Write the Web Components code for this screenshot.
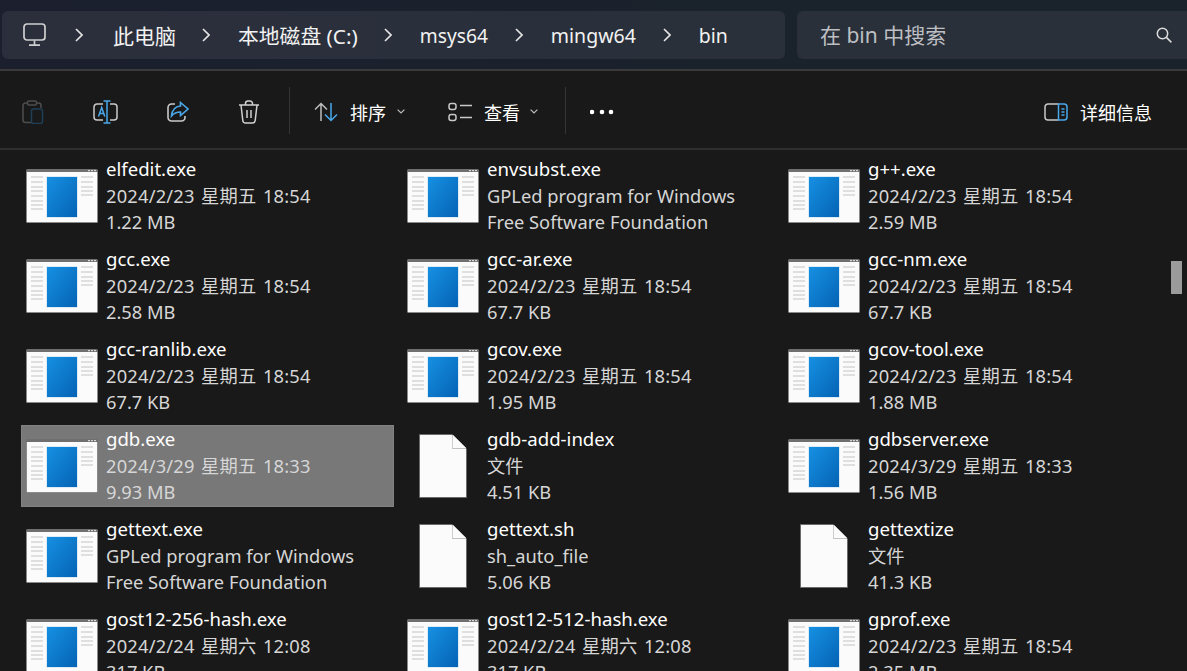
<!DOCTYPE html>
<html lang="zh"><head><meta charset="utf-8"><title>bin</title>
<style>
html,body{margin:0;padding:0;height:671px;overflow:hidden;background:#191919}
body{font-family:"Noto Sans","Noto Sans CJK SC",sans-serif;color:#fff}
</style></head><body>
<explorer-window>
  <address-row>
    <crumb-item style="font-size:21px">此电脑</crumb-item><crumb-item style="font-size:20.8px">本地磁盘 (C:)</crumb-item><crumb-item style="font-size:19.2px">msys64</crumb-item><crumb-item style="font-size:19.5px;margin-left:1px">mingw64</crumb-item><crumb-item style="font-size:19.5px;margin-left:1px">bin</crumb-item>
  </address-row>
  <command-bar></command-bar>
  <file-grid>
    <file-item name="elfedit.exe" l2="2024/2/23 星期五 18:54" l3="1.22 MB"></file-item>
    <file-item name="envsubst.exe" l2="GPLed program for Windows" l3="Free Software Foundation"></file-item>
    <file-item name="g++.exe" l2="2024/2/23 星期五 18:54" l3="2.59 MB"></file-item>
    <file-item name="gcc.exe" l2="2024/2/23 星期五 18:54" l3="2.58 MB"></file-item>
    <file-item name="gcc-ar.exe" l2="2024/2/23 星期五 18:54" l3="67.7 KB"></file-item>
    <file-item name="gcc-nm.exe" l2="2024/2/23 星期五 18:54" l3="67.7 KB"></file-item>
    <file-item name="gcc-ranlib.exe" l2="2024/2/23 星期五 18:54" l3="67.7 KB"></file-item>
    <file-item name="gcov.exe" l2="2024/2/23 星期五 18:54" l3="1.95 MB"></file-item>
    <file-item name="gcov-tool.exe" l2="2024/2/23 星期五 18:54" l3="1.88 MB"></file-item>
    <file-item name="gdb.exe" l2="2024/3/29 星期五 18:33" l3="9.93 MB" selected></file-item>
    <file-item name="gdb-add-index" l2="文件" l3="4.51 KB" kind="doc"></file-item>
    <file-item name="gdbserver.exe" l2="2024/3/29 星期五 18:33" l3="1.56 MB"></file-item>
    <file-item name="gettext.exe" l2="GPLed program for Windows" l3="Free Software Foundation"></file-item>
    <file-item name="gettext.sh" l2="sh_auto_file" l3="5.06 KB" kind="doc"></file-item>
    <file-item name="gettextize" l2="文件" l3="41.3 KB" kind="doc"></file-item>
    <file-item name="gost12-256-hash.exe" l2="2024/2/24 星期六 12:08" l3="317 KB"></file-item>
    <file-item name="gost12-512-hash.exe" l2="2024/2/24 星期六 12:08" l3="317 KB"></file-item>
    <file-item name="gprof.exe" l2="2024/2/23 星期五 18:54" l3="2.35 MB"></file-item>
  </file-grid>
</explorer-window>
<script>
const def=(tag,html)=>{customElements.define(tag,class extends HTMLElement{
  constructor(){super();this.attachShadow({mode:'open'}).innerHTML=html;}
})};
def('explorer-window',`<style>:host{display:flex;flex-direction:column;width:1187px;height:671px;overflow:hidden;position:relative;background:#191919}
.thumb{position:absolute;left:1171px;top:261px;width:11px;height:33px;background:#9b9b9b}</style><slot></slot><div class="thumb"></div>`);

const CHEV=`<svg width="8" height="14" viewBox="0 0 8 14" fill="none" stroke="#e6e6e6" stroke-width="1.6" style="display:block;flex:none"><path d="M1 1l6 6-6 6"/></svg>`;
def('address-row',`<style>
:host{display:flex;gap:12px;height:69px;box-sizing:border-box;padding:11px 0 10px 2px;background:linear-gradient(90deg,#1b1f2e,#1a222c 60%);flex:none}
.bar{width:783px;height:48px;border-radius:6px;background:linear-gradient(90deg,#2b2f3c,#29303a);display:flex;align-items:center;box-sizing:border-box;padding-left:21px}
.pc{margin-right:28px;display:block;flex:none}
.search{flex:1;height:48px;border-radius:6px 0 0 6px;background:#29303a;display:flex;align-items:center;justify-content:space-between;box-sizing:border-box;padding:0 15px 2px 23px;color:#bdbfc2;font-size:21px}
</style>
<div class="bar"><svg class="pc" width="24" height="24" viewBox="0 0 24 24" fill="none" stroke="#cfcfcf" stroke-width="1.7"><rect x="1" y="1" width="21" height="16" rx="3"/><path d="M11.5 17.5v4.500M6 22.200h11"/></svg><slot></slot></div>
<div class="search"><span>在 bin 中搜索</span><svg width="16" height="16" viewBox="0 0 16 16" fill="none" stroke="#dcdcdc" stroke-width="1.5" style="margin-top:2px"><circle cx="6.5" cy="6.5" r="5.2"/><path d="M10.4 10.4l5 5"/></svg></div>`);
def('crumb-item',`<style>:host{display:flex;align-items:center;gap:28px;margin-right:26px;font-size:20px;color:#f2f2f2;white-space:nowrap}
:host(:first-child){gap:30px}</style>${CHEV}<span><slot></slot></span>`);

const SMALLCHEV=`<svg width="8" height="5" viewBox="0 0 8 5" fill="none" stroke="#bdbdbd" stroke-width="1.2" style="display:block"><path d="M.6.6L4 4 7.4.6"/></svg>`;
def('command-bar',`<style>
:host{display:flex;align-items:center;flex:none;height:81px;box-sizing:border-box;border-top:2px solid #3a3a3a;border-bottom:2px solid #2e2e2e;padding:4px 0 0 21px;background:#191919;font-size:18px;color:#fff}
svg{display:block;flex:none}
.sep{width:1px;height:47px;background:#343434;flex:none;margin-top:-3px}
.lbl{white-space:nowrap}
.grow{flex:1}
</style>
<svg style="margin-right:48px" width="24" height="24" viewBox="0 0 24 24" fill="none" stroke-width="1.5"><path stroke="#4d4d4d" d="M10 22.500H4.500a2.500 2.500 0 0 1-2.500-2.500V5.500A2.500 2.500 0 0 1 4.500 3H6M16 3h1.500a2.500 2.500 0 0 1 2.500 2.500V8"/><rect stroke="#4d4d4d" x="6.500" y="1" width="9" height="4" rx="1.500"/><rect stroke="#1f4057" x="10.500" y="9" width="11" height="14.500" rx="2"/></svg>
<svg style="margin-right:49px" width="25" height="24" viewBox="0 0 25 24" fill="none" stroke-width="1.5"><path stroke="#c9c9c9" d="M10 4H4a3 3 0 0 0-3 3v10a3 3 0 0 0 3 3h6M17 4h4a3 3 0 0 1 3 3v10a3 3 0 0 1-3 3h-4"/><path stroke="#4aa8ea" d="M10.500 1H17.500M14 1v22M10.500 23H17.500M5.500 16.500L8.700 7.500 11.800 16.500M6.600 13.500h4.300"/></svg>
<svg style="margin-right:49px" width="22" height="21" viewBox="0 0 22 21" fill="none" stroke-width="1.6"><path stroke="#c9c9c9" d="M8 3H4.500A3.500 3.500 0 0 0 1 6.500v10A3.500 3.500 0 0 0 4.500 20h10a3.500 3.500 0 0 0 3.500-3.500V15"/><path stroke="#4aa8ea" d="M13.500 1.500L21 8l-7.500 6.500V11C9.500 11 7 12 4.500 15 5 9.500 8 5.500 13.500 5z"/></svg>
<svg style="margin-right:29px" width="22" height="24" viewBox="0 0 22 24" fill="none" stroke="#d0d0d0" stroke-width="1.5"><path d="M1 5h20M7.500 5V3.500A2.500 2.500 0 0 1 10 1h2a2.500 2.500 0 0 1 2.500 2.500V5M3 5l1.800 15.500A2.800 2.800 0 0 0 7.600 23h6.800a2.800 2.800 0 0 0 2.800-2.500L19 5M9 10v8M13 10v8"/></svg>
<div class="sep" style="margin-right:24px"></div>
<svg style="margin-right:12px" width="24" height="20" viewBox="0 0 24 20" fill="none" stroke-width="1.5"><path stroke="#bdbdbd" d="M7 19V1.500M1 7.500l6-6 6 6"/><path stroke="#4aa8ea" d="M17 1v17.500M11 12.500l6 6 6-6"/></svg>
<span class="lbl" style="margin-right:11px">排序</span>${SMALLCHEV.replace('style="','style="margin-right:43px;')}
<svg style="margin-right:12px" width="24" height="20" viewBox="0 0 24 20" fill="none" stroke="#c9c9c9" stroke-width="1.5"><rect x="1" y="1.500" width="7" height="6" rx="2.200"/><rect x="1" y="12.500" width="7" height="6" rx="2.200"/><path d="M12 3.500h12M12 15.500h12"/></svg>
<span class="lbl" style="margin-right:10px">查看</span>${SMALLCHEV.replace('style="','style="margin-right:27px;')}
<div class="sep" style="margin-right:24px"></div>
<svg width="24" height="6" viewBox="0 0 24 6" fill="#fff"><circle cx="2" cy="3" r="2.300"/><circle cx="12" cy="3" r="2.300"/><circle cx="21" cy="3" r="2.300"/></svg>
<div class="grow"></div>
<svg style="margin-right:12px" width="24" height="18" viewBox="0 0 24 18" fill="none" stroke-width="1.5"><path stroke="#c9c9c9" d="M14.500 1H4a3 3 0 0 0-3 3v10a3 3 0 0 0 3 3h10.500"/><path stroke="#4aa8ea" d="M14.500 1H20a3 3 0 0 1 3 3v10a3 3 0 0 1-3 3h-5.500zM17.500 6h3M17.500 9h3M17.500 12h3"/></svg>
<span class="lbl" style="margin-right:35px">详细信息</span>`);

def('file-grid',`<style>:host{display:grid;grid-template-columns:repeat(3,373px);grid-auto-rows:82px;gap:8px;padding:5px 0 0 21px;flex:none}</style><slot></slot>`);

const APP=`<svg width="72" height="54" viewBox="0 0 72 54" style="display:block"><defs><linearGradient id="g" x1="0" y1="0" x2="1" y2="1"><stop offset="0" stop-color="#1690e2"/><stop offset="1" stop-color="#0563b4"/></linearGradient></defs>
<rect width="72" height="54" rx="1.5" fill="#6f6f6f"/><rect x=".8" y="3" width="70.400" height="50.200" fill="#fbfbfb"/>
<g fill="#d6d6d6"><rect x="62" y="1" width="2" height="1.200"/><rect x="65" y="1" width="2" height="1.200"/><rect x="68" y="1" width="2" height="1.200"/></g>
<rect x="20.500" y="7.500" width="31" height="41" fill="#bcdcf3"/><rect x="21" y="8" width="30" height="40" fill="url(#g)"/>
<g fill="#c4c4c4"><rect x="5" y="7.500" width="12" height="1"/><rect x="5" y="12.500" width="12" height="1"/><rect x="5" y="17.500" width="12" height="1"/><rect x="5" y="21.500" width="12" height="1"/><rect x="5" y="26.500" width="12" height="1"/><rect x="5" y="31.500" width="12" height="1"/><rect x="5" y="35.500" width="12" height="1"/><rect x="5" y="39.500" width="12" height="1"/>
<rect x="55" y="7.500" width="12" height="1"/><rect x="55" y="12.500" width="12" height="1"/><rect x="55" y="17.500" width="12" height="1"/><rect x="55" y="21.500" width="12" height="1"/><rect x="55" y="25.500" width="12" height="1"/></g></svg>`;
const DOC=`<svg width="48" height="64" viewBox="0 0 48 64" style="display:block"><path d="M.5.500H33L47.500 15V63.500H.5z" fill="#fbfbfb" stroke="#6a6a6a"/><path d="M33 .8V15H47.200z" fill="#c2c2c2"/><path d="M33.800 .8L47.200 14H33.800z" fill="#fbfbfb"/></svg>`;
customElements.define('file-item',class extends HTMLElement{
  constructor(){super();this.attachShadow({mode:'open'});}
  connectedCallback(){
    const a=n=>this.getAttribute(n)||'';
    const isDate=a('l2').includes('星期');
    this.shadowRoot.innerHTML=`<style>
:host{display:flex;align-items:center;box-sizing:border-box;padding-left:5px;gap:8px;height:82px;font-size:18.3px;line-height:26px;white-space:nowrap;color:#d6d6d6}
:host([selected]){background:#787878;box-shadow:inset 0 0 0 1px #828282}
.ic{width:72px;display:flex;justify-content:center;flex:none}
.txt{padding-bottom:1px}
.name{color:#fff;font-size:18.6px;margin-bottom:1px}
.date{letter-spacing:.2px;word-spacing:1.5px}
</style><div class="ic">${a('kind')==='doc'?DOC:APP}</div><div class="txt"><div class="name">${a('name')}</div><div class="${isDate?'date':''}">${a('l2')}</div><div>${a('l3')}</div></div>`;
  }
});
</script>
</body></html>
